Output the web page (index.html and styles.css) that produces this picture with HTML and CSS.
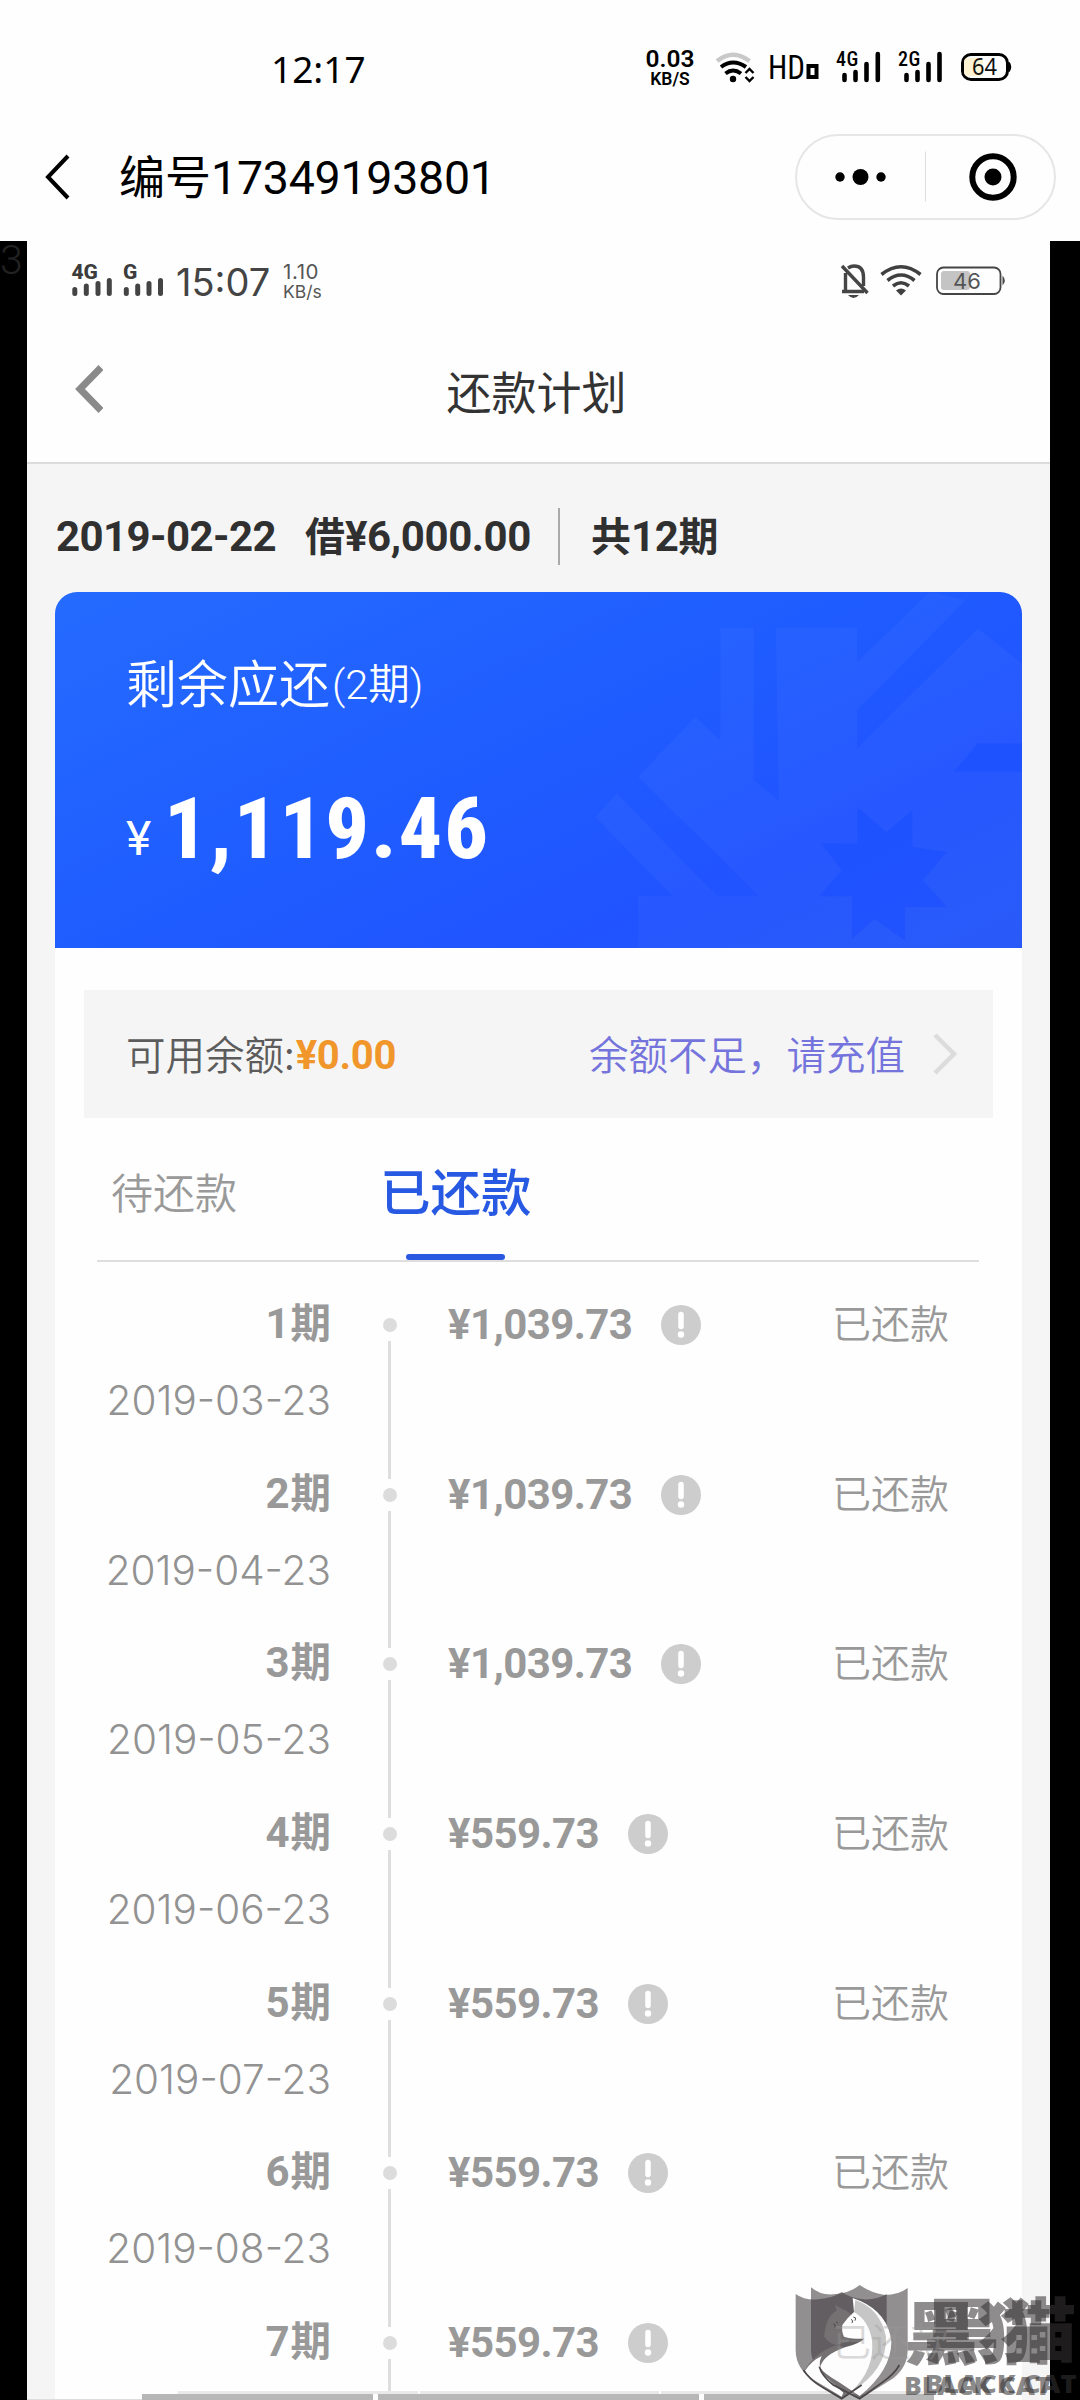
FILE: index.html
```html
<!DOCTYPE html>
<html lang="zh-CN">
<head>
<meta charset="utf-8">
<title>还款计划</title>
<link rel="stylesheet" href="styles.css">
</head>
<body>
<svg width="0" height="0" class="defs">
  <defs>
    <symbol id="info" viewBox="0 0 40 40"><circle cx="20" cy="20" r="20" fill="#cdcdcd"/><path d="M20 9.500v12" stroke="#fff" stroke-width="5.500" stroke-linecap="round"/><circle cx="20" cy="29.500" r="3.200" fill="#fff"/></symbol>
  </defs>
</svg>
<div class="screen">
  <header class="host">
    <div class="host-status">
      <span class="clock">12:17</span>
      <div class="speed"><b>0.03</b><span>KB/S</span></div>
      <svg class="host-icons" width="300" height="50" viewBox="712 42 300 50" fill="none">
        <path d="M717 61Q733 48.500 749.500 61" stroke="#c9c9c9" stroke-width="4.500"/>
        <path d="M721 67Q733 58 746 67M725.500 73.500Q733 67.500 741 73.500" stroke="#000" stroke-width="4"/>
        <circle cx="733" cy="79" r="3.200" fill="#000"/>
        <path d="M745.500 73l4-4 4 4M745.500 77l4 4 4-4" stroke="#000" stroke-width="2.400"/>
        <text x="768" y="79" class="hd" textLength="37" lengthAdjust="spacingAndGlyphs">HD</text>
        <rect x="808.500" y="66" width="8" height="11" stroke="#000" stroke-width="4"/>
        <text x="836" y="66" class="net">4G</text>
        <text x="898" y="66" class="net">2G</text>
        <path d="M844.500 75v5M855.500 72v8M866.500 64v16M877.800 54v26M906.500 75v5M917.500 72v8M928.500 64v16M939.500 54v26" stroke="#000" stroke-width="4.600" stroke-linecap="round"/>
        <rect x="962.500" y="54.500" width="45" height="25" rx="8.500" stroke="#000" stroke-width="3"/>
        <path d="M967 58h16v18h-16a4 4 0 0 1-3-4v-10a4 4 0 0 1 3-4z" fill="#fdf3d2"/>
        <path d="M1009 62.500q3 4.500 0 9" fill="#000" stroke="#000" stroke-width="1.500"/>
        <text x="972" y="75" class="batt" textLength="25" lengthAdjust="spacingAndGlyphs">64</text>
      </svg>
    </div>
    <div class="host-nav">
      <svg class="host-back" width="28" height="48" viewBox="0 0 28 48" fill="none"><path d="M25 3L5 24L25 45" stroke="#000" stroke-width="4"/></svg>
      <h1>编号<span>17349193801</span></h1>
      <svg class="capsule" width="261" height="86" viewBox="0 0 261 86" fill="none">
        <rect x="1" y="1" width="259" height="84" rx="42" stroke="#e6e6e6" stroke-width="2"/>
        <path d="M130.500 17.500v50" stroke="#dedede"/>
        <circle cx="45" cy="43" r="4.700" fill="#000"/><circle cx="65.500" cy="43" r="8" fill="#000"/><circle cx="86" cy="43" r="4.700" fill="#000"/>
        <circle cx="198" cy="43" r="20.700" stroke="#000" stroke-width="6"/><circle cx="198" cy="43" r="8.500" fill="#000"/>
      </svg>
    </div>
  </header>

  <main class="viewer">
    <div class="gutter"><span>3</span></div>
    <section class="photo">
      <div class="app-status">
        <svg width="76" height="40" viewBox="70 260 76 40" class="sig">
          <text x="71.500" y="279" class="net2">4G</text><text x="123" y="279" class="net2">G</text>
          <path d="M74.800 289.500v4M86.300 286v7.500M98 283.500v10M109.300 280.500v13M126.300 289.500v4M137.700 286v7.500" stroke="#444" stroke-width="5" stroke-linecap="round"/>
        </svg>
        <svg width="24" height="40" viewBox="142 260 24 40"><path d="M149 283.500v10M160.500 280.500v13" stroke="#444" stroke-width="5" stroke-linecap="round"/></svg>
        <span class="clock2">15:07</span>
        <div class="speed2"><span>1.10</span><small>KB/s</small></div>
        <svg class="app-icons" width="170" height="44" viewBox="838 258 170 44" fill="none">
          <path d="M842 291.500H864M845.500 291V273M848 268Q851 266 854 266Q863.500 266 863.500 277V286M842 266L867.500 293" stroke="#454545" stroke-width="3.400"/>
          <path d="M848 295h11q-5.500 6-11 0z" fill="#454545"/>
          <path d="M881.500 274.500Q901 259 920.500 274.500M887.500 280.500Q901 269.500 914.500 280.500M893 286Q901 279.500 909 286" stroke="#404040" stroke-width="3.600"/>
          <path d="M896 290.500q5-4 10 0l-5 5z" fill="#404040"/>
          <rect x="937" y="267.500" width="63.500" height="26.500" rx="6.500" stroke="#454545" stroke-width="1.800"/>
          <rect x="941" y="271" width="29" height="19" rx="3" fill="#c4c4c4"/>
          <path d="M1002.500 275.500q4.500 5 0 10z" fill="#454545"/>
          <text x="953" y="289" class="batt2">46</text>
        </svg>
      </div>
      <div class="app-nav">
        <svg class="app-back" width="34" height="52" viewBox="0 0 34 52" fill="none"><path d="M32 4.500L11 26L32 47.500" stroke="#8a8a8a" stroke-width="7"/></svg>
        <h2>还款计划</h2>
      </div>
      <div class="body">
        <div class="loan"><span class="num">2019-02-22</span><span class="borrow">借<span class="num">¥6,000.00</span></span><i></i><span class="terms">共<span class="num">12</span>期</span></div>
        <div class="hero">
          <svg class="deco" viewBox="0 36 1398 1067" preserveAspectRatio="none">
            <path d="M523 143H620V600L692 660L684 143H920V245L1130 36L1235 60L920 390V505L1270 145L1398 250V1103H285V948H635L285 590L450 410L523 480ZM222 640L515 948H385L160 710Z" fill="#fff" fill-opacity=".03"/>
            <path d="M920 680L1005 755L1080 690V800L1180 815L1110 900L1180 980H1058V1080L970 1015L905 1075V948H810L875 870L815 790H920ZM1270 490H1398V575H1200Z" fill="#1c50ff" fill-opacity=".7"/>
          </svg>
          <div class="remain">剩余应还<small>(<span>2</span>期)</small></div>
          <div class="total"><span>¥</span><b>1,119.46</b></div>
        </div>
        <div class="panel">
          <div class="balance">
            <span class="avail">可用余额:</span><b>¥0.00</b>
            <a>余额不足，请充值</a>
            <svg width="26" height="44" viewBox="0 0 26 44" fill="none"><path d="M3 3L22 22L3 41" stroke="#dcdcdc" stroke-width="4.500"/></svg>
          </div>
          <nav class="tabs"><span class="tab">待还款</span><span class="tab on">已还款</span></nav>
          <ul class="plan">
            <li><div class="when"><b>1<em>期</em></b><time>2019-03-23</time></div><div class="rail"></div><div class="amt">¥1,039.73<svg><use href="#info"/></svg></div><div class="state">已还款</div></li>
            <li><div class="when"><b>2<em>期</em></b><time>2019-04-23</time></div><div class="rail"></div><div class="amt">¥1,039.73<svg><use href="#info"/></svg></div><div class="state">已还款</div></li>
            <li><div class="when"><b>3<em>期</em></b><time>2019-05-23</time></div><div class="rail"></div><div class="amt">¥1,039.73<svg><use href="#info"/></svg></div><div class="state">已还款</div></li>
            <li><div class="when"><b>4<em>期</em></b><time>2019-06-23</time></div><div class="rail"></div><div class="amt">¥559.73<svg><use href="#info"/></svg></div><div class="state">已还款</div></li>
            <li><div class="when"><b>5<em>期</em></b><time>2019-07-23</time></div><div class="rail"></div><div class="amt">¥559.73<svg><use href="#info"/></svg></div><div class="state">已还款</div></li>
            <li><div class="when"><b>6<em>期</em></b><time>2019-08-23</time></div><div class="rail"></div><div class="amt">¥559.73<svg><use href="#info"/></svg></div><div class="state">已还款</div></li>
            <li><div class="when"><b>7<em>期</em></b></div><div class="rail"></div><div class="amt">¥559.73<svg><use href="#info"/></svg></div><div class="state faint">已还款</div></li>
          </ul>
        </div>
      </div>
    </section>
    <div class="gutter"></div>
  </main>

  <svg class="strip" width="1080" height="12" viewBox="0 2388 1080 12">
    <path d="M178 2391h240v3h-240zM420 2391h239v3h-239zM661 2391h262v3h-262z" fill="#e9e9e9"/>
    <path d="M142 2394h231v6h-231zM378 2394h321v6h-321zM704 2394h230v6h-230z" fill="#b7b7b7"/>
    <path d="M27 2399h115v1h-115z" fill="#ddd"/>
  </svg>

  <svg class="mark" width="300" height="130" viewBox="0 0 900 390">
    <g fill="#3c383a" fill-opacity=".56">
      <path d="M47 72Q75 92 115 88Q160 84 185 66Q215 86 250 88Q290 90 320 72V240Q320 300 250 340L185 388L110 338Q47 300 47 240Z"/>
      <path d="M93 52Q120 76 160 73Q210 70 239 45Q275 70 315 75Q355 75 383 54V240Q383 290 340 325L239 388L150 325Q93 290 93 240Z"/>
    </g>
    <path d="M165 104L185 116Q214 125 222 150L205 216Q110 235 75 300Q90 325 120 342L185 384L240 340L190 230Q150 225 132 200L138 165Q150 130 170 122Z" fill="#757173"/>
    <path d="M75 302Q95 272 125 258Q112 285 128 312L190 368L185 380L115 338Q84 320 75 302Z" fill="#fdfdfd"/>
    <path d="M218 84L240 92Q325 130 334 215Q334 300 239 378L175 335Q132 312 120 292Q130 255 195 232Q240 220 252 206Q215 207 203 203L192 200Q184 185 187 165Q200 145 222 126Z" fill="#fdfdfd"/>
    <path d="M226 90Q300 115 318 200Q322 300 212 366Q285 300 276 210Q265 150 222 126Z" fill="#c6c6c6"/>
    <path d="M213 148l5 4-2 7M220 141l7 3-2 8M160 162l6 3-2 7M168 156l6 3" fill="none" stroke="#4c484a" stroke-width="3"/>
    <path d="M70 300Q90 330 125 350L185 386L245 345M118 290Q125 318 160 345L239 386L310 335Q345 310 358 285" fill="none" stroke="#4a4648" stroke-width="5"/>
    <g fill="#353234" fill-opacity=".56">
      <text transform="translate(372 268) scale(1 .92)" class="cn">黑猫</text>
      <text transform="translate(430 262) scale(1 .92)" class="cn big">黑猫</text>
      <text x="372" y="376" class="en" textLength="440" lengthAdjust="spacingAndGlyphs">BLACK CAT</text>
      <text x="434" y="369" class="en" textLength="456" lengthAdjust="spacingAndGlyphs">BLACK CAT</text>
    </g>
  </svg>
</div>
</body>
</html>
```
FILE: styles.css
```css
* { box-sizing: border-box; margin: 0; padding: 0; }
body { background: #fff; font-family: Roboto, "Noto Sans CJK SC", sans-serif; }
svg { display: block; flex: none; }
.defs { position: absolute; }
.screen { position: relative; width: 1080px; height: 2400px; overflow: hidden; background: #fefefe; display: flex; flex-direction: column; }

.host { height: 241px; flex: none; color: #000; }
.host-status { height: 133px; padding: 42px 68px 0 271px; display: flex; align-items: flex-start; }
.clock { font: 400 37px/56px "Noto Sans", sans-serif; width: 374px; margin-top: -1px; }
.speed { width: 50px; height: 50px; margin-right: 17px; display: flex; flex-direction: column; align-items: center; font-family: Roboto, sans-serif; }
.speed b { font-weight: 600; font-size: 24.500px; line-height: 24px; margin-top: 5px; }
.speed span { font-weight: 600; font-size: 17.500px; line-height: 18px; margin-top: -1px; }
.hd { font: 400 34px "Roboto Condensed", sans-serif; fill: #000; }
.net { font: 500 20px "Roboto Condensed", sans-serif; fill: #000; letter-spacing: .5px; }
.batt { font: 400 24px "Noto Sans", sans-serif; fill: #111; }
.host-nav { height: 87px; display: flex; align-items: center; padding: 0 24px 0 43px; }
.host-back { margin-right: 48px; }
.host-nav h1 { font-weight: 400; font-size: 46px; line-height: 60px; flex: 1; padding-top: 2px; }
.host-nav h1 span { font-size: 46.500px; letter-spacing: -.250px; }

.viewer { display: flex; flex: 1; min-height: 0; }
.gutter { width: 27px; background: #000; flex: none; }
.gutter:last-child { width: 30px; }
.gutter span { display: block; font: 300 41px/49px Roboto, sans-serif; color: #222; margin-top: -5px; }
.photo { flex: 1; min-width: 0; display: flex; flex-direction: column; }

.app-status { height: 85px; padding: 19px 42px 0 43px; display: flex; }
.sig { margin-right: -4px; }
.net2 { font: 800 21px Roboto, sans-serif; fill: #3c3c3c; }
.clock2 { font: 400 38px/46px Inter, sans-serif; color: #444; margin: -1px 0 0 10px; width: 98px; }
.speed2 { color: #555; font-family: Inter, sans-serif; margin-left: 9px; display: flex; flex-direction: column; flex: 1; }
.speed2 span { font-size: 20.500px; line-height: 24px; letter-spacing: .6px; }
.speed2 small { font-size: 17.500px; line-height: 16px; }
.app-icons { margin-top: -2px; }
.batt2 { font: 400 22px Inter, sans-serif; fill: #555; }
.app-nav { height: 138px; border-bottom: 2px solid #dcdcdc; display: grid; grid-template-columns: 74px 1fr 120px; align-items: start; padding: 37px 0 0 42px; }
.app-nav h2 { font: 400 45px/60px "Noto Sans CJK SC", sans-serif; color: #333; text-align: center; margin-top: -2px; }

.body { flex: 1; min-height: 0; background: #f5f5f5; padding: 0 28px; display: flex; flex-direction: column; }
.loan { height: 128px; flex: none; padding-top: 14px; display: flex; align-items: center; color: #303030; font: 700 40px/60px "Noto Sans CJK SC", sans-serif; }
.loan .num { font: 700 42px/60px Roboto, sans-serif; letter-spacing: -.4px; }
.loan > .num { width: 250px; padding-left: 1px; margin-top: 4px; letter-spacing: -.6px; }
.loan i { width: 2px; height: 57px; background: #aaa; margin: 3px 31px 0 27px; }
.hero { position: relative; height: 356px; flex: none; border-radius: 22px 22px 0 0; overflow: hidden; background: linear-gradient(155deg, #256bff 0%, #1f5cff 48%, #2153ff 75%, #2355f8 100%); color: #fff; padding: 54px 71px 0; }
.deco { position: absolute; right: 0; top: 0; width: 482px; height: 356px; }
.remain { font: 350 51px/70px "Noto Sans CJK SC", sans-serif; height: 70px; }
.remain small { display: inline-block; font: 350 41.500px/60px Roboto, "Noto Sans CJK SC", sans-serif; margin-left: 2px; transform: translateY(-4px); }
.total { display: flex; align-items: baseline; margin-top: 58px; height: 110px; }
.total span { font: 400 48px/100px Roboto, sans-serif; width: 38px; transform: translateY(-3px); }
.total b { font: 800 86px/110px "Roboto Condensed", sans-serif; letter-spacing: 2px; }

.panel { flex: 1; min-height: 0; background: #fefefe; padding: 42px 29px 0 29px; }
.balance { height: 128px; background: #f5f5f5; display: flex; align-items: center; padding: 0 35px 0 42px; font: 400 39.500px/58px "Noto Sans CJK SC", sans-serif; }
.avail { color: #5c5c5c; font-weight: 350; margin-top: -2px; }
.balance b { flex: 1; font: 700 40px/58px Roboto, sans-serif; color: #f0962a; letter-spacing: -.3px; margin: 3px 0 0 1px; }
.balance a { color: #7474dc; font-weight: 350; margin: -2px 27px 0 0; }
.tabs { height: 144px; margin: 0 14px 0 13px; border-bottom: 2px solid #dedede; display: flex; font: 350 42px/60px "Noto Sans CJK SC", sans-serif; color: #999; padding: 43px 0 0 14px; }
.tab { width: 269px; }
.on { position: relative; color: #2859e2; font-weight: 500; font-size: 50.500px; margin-top: -2px; }
.on::after { content: ""; position: absolute; left: 26px; top: 95px; width: 99px; height: 6px; border-radius: 3px; background: #2a58e0; }

.plan { list-style: none; padding-top: 47px; }
.plan li { height: 169.700px; display: grid; grid-template-columns: 247px 117px 385px 1fr; color: #999; }
.when { text-align: right; margin-top: -18px; }
.when b { display: block; font: 700 42px/60px Roboto, sans-serif; }
.when em { font: 700 40.500px/60px "Noto Sans CJK SC", sans-serif; margin-left: 1px; }
.when time { display: block; font: 300 40.500px/60px Inter, sans-serif; margin-top: 17px; color: #929292; }
.rail { display: flex; flex-direction: column; align-items: center; }
.rail::before { content: ""; width: 14px; height: 14px; border-radius: 7px; background: #dcdcdc; margin: 9px 0; }
.rail::after { content: ""; width: 3px; flex: 1; background: #dedede; }
.amt { display: flex; align-items: center; height: 32px; font: 700 42px/32px Roboto, sans-serif; letter-spacing: -.6px; }
.amt svg { width: 40px; height: 40px; margin-left: 29px; }
.state { font: 350 39px/32px "Noto Sans CJK SC", sans-serif; margin: -4px 0 0 -1px; }
.faint { position: relative; z-index: 2; opacity: .35; }

.strip { position: absolute; left: 0; bottom: 0; }
.mark { position: absolute; left: 780px; bottom: 0; }
.cn { font: 900 222px "Noto Sans CJK SC", sans-serif; }
.big { font-size: 230px; }
.en { font: 800 72px "Open Sans", sans-serif; }
```
